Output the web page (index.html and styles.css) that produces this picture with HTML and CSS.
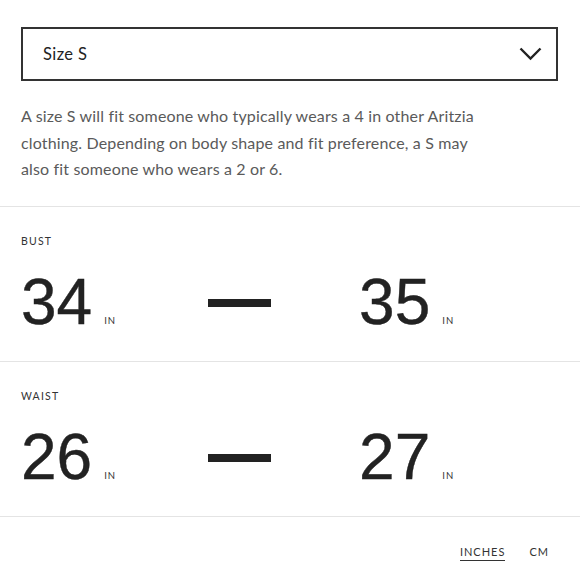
FILE: index.html
```html
<!DOCTYPE html>
<html>
<head>
<meta charset="utf-8">
<link rel="stylesheet" href="styles.css">
</head>
<body>
<div class="top">
  <div class="select">
    <span class="select-label">Size S</span>
    <svg class="chevron" width="23" height="14" viewBox="0 0 23 14"><path d="M1.5 1.5 L11.5 11.5 L21.5 1.5" fill="none" stroke="#222" stroke-width="2.4"/></svg>
  </div>
  <p class="desc">A size S will fit someone who typically wears a 4 in other Aritzia clothing. Depending on body shape and fit preference, a S may also fit someone who wears a 2 or 6.</p>
</div>
<div class="measure">
  <div class="m-label">BUST</div>
  <div class="m-row">
    <div class="val"><span class="num">34</span><span class="unit">IN</span></div>
    <div class="dash"></div>
    <div class="val"><span class="num">35</span><span class="unit">IN</span></div>
  </div>
</div>
<div class="measure">
  <div class="m-label">WAIST</div>
  <div class="m-row">
    <div class="val"><span class="num">26</span><span class="unit">IN</span></div>
    <div class="dash"></div>
    <div class="val"><span class="num">27</span><span class="unit">IN</span></div>
  </div>
</div>
<div class="toggle">
  <span class="opt active">INCHES</span>
  <span class="opt">CM</span>
</div>
</body>
</html>
```
FILE: styles.css
```css
html, body { margin: 0; padding: 0; background: #fff; }
body { font-family: "Lato", "Liberation Sans", sans-serif; color: #222; width: 580px; }
.top { padding: 27px 22px 0 21px; }
.select {
  height: 50px;
  border: 2px solid #333;
  display: flex;
  align-items: center;
  justify-content: space-between;
  padding: 0 14px 0 20px;
}
.select-label { font-size: 16.5px; color: #222; letter-spacing: 0.4px; }
.chevron { display: block; }
.desc {
  margin: 22px 0 23px;
  max-width: 470px;
  font-size: 16px;
  line-height: 26.5px;
  color: #5a5a5a;
  letter-spacing: 0.15px;
}
.measure {
  border-top: 1.5px solid #e4e4e4;
  padding: 28px 21px 0;
  height: 126px;
}
.m-label { font-size: 10.5px; letter-spacing: 1.2px; color: #333; line-height: 12px; }
.m-row { display: flex; align-items: baseline; margin-top: 19px; }
.val { display: flex; align-items: baseline; }
.num { font-family: "Liberation Sans", Arial, sans-serif; font-size: 64px; line-height: 72px; color: #222; -webkit-text-stroke: 0.4px #222; }
.unit { font-size: 9.5px; letter-spacing: 1px; margin-left: 12px; color: #333; }
.dash { width: 63px; height: 8px; background: #222; margin: 0 88px 0 92px; align-self: center; position: relative; top: 1px; }
.toggle {
  border-top: 1.5px solid #e4e4e4;
  display: flex;
  justify-content: flex-end;
  align-items: flex-start;
  gap: 24px;
  padding: 28px 31px 0 0;
}
.opt { font-size: 11px; letter-spacing: 1px; color: #333; line-height: 14px; }
.opt.active { border-bottom: 1px solid #333; padding-bottom: 1px; }
```
